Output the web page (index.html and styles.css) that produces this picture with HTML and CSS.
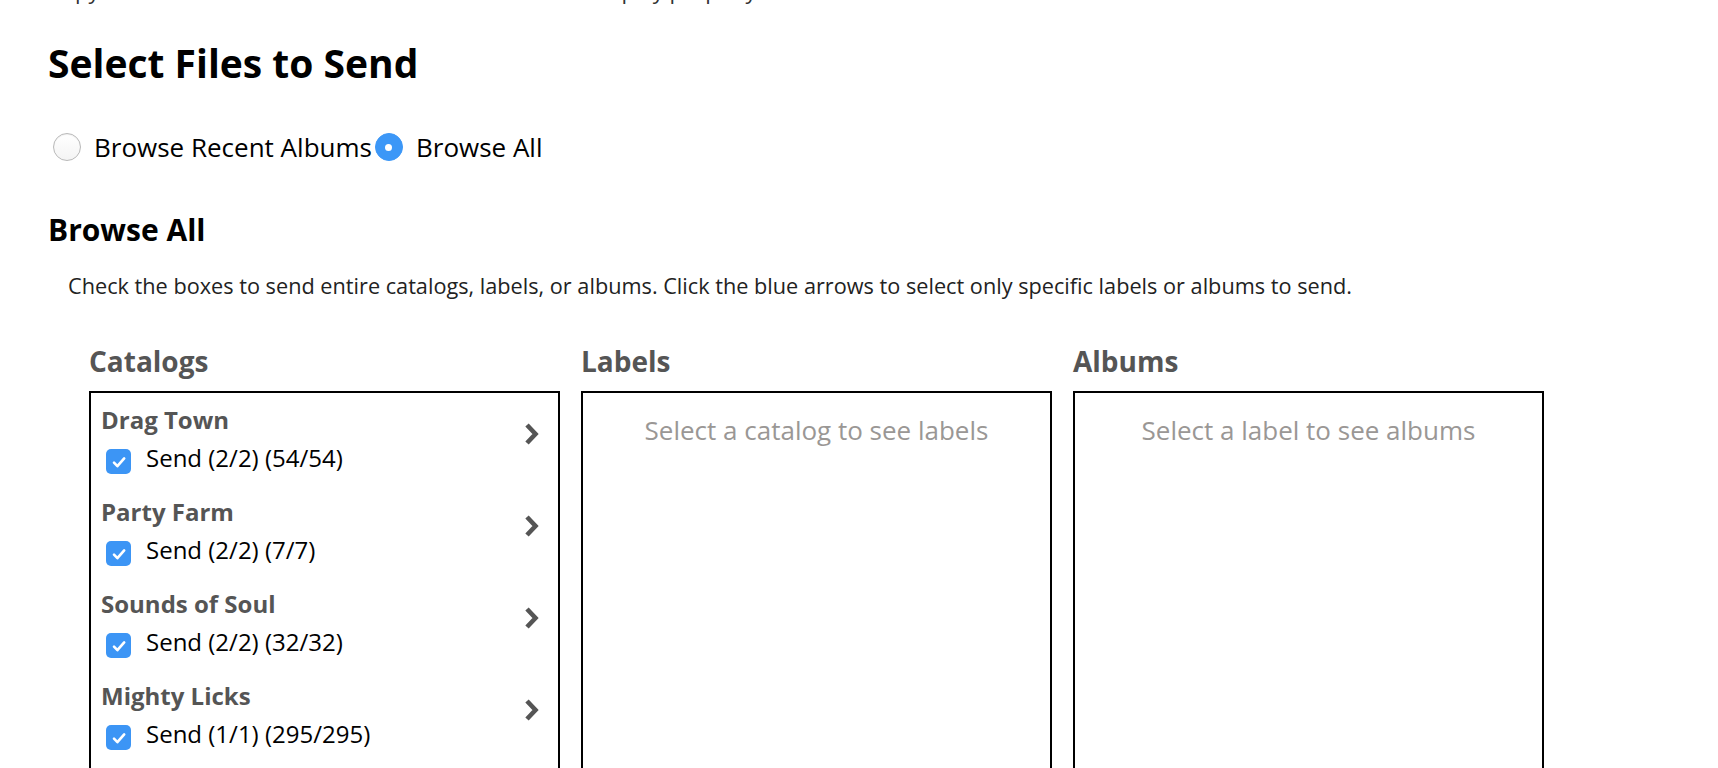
FILE: index.html
```html
<!DOCTYPE html>
<html>
<head>
<meta charset="utf-8">
<link rel="stylesheet" href="styles.css">
</head>
<body>
<div class="page">
  <p class="intro">Copy metadata of each release to the stores that will display properly on release.</p>
  <h1 class="title">Select Files to Send</h1>
  <div class="radios">
    <label class="radio"><span class="radio-dot"></span><span>Browse Recent Albums</span></label>
    <label class="radio checked"><span class="radio-dot"></span><span>Browse All</span></label>
  </div>
  <h2 class="subtitle">Browse All</h2>
  <p class="desc">Check the boxes to send entire catalogs, labels, or albums. Click the blue arrows to select only specific labels or albums to send.</p>
  <div class="columns">
    <div class="column">
      <h3 class="col-title">Catalogs</h3>
      <div class="box list">
        <div class="item">
          <div class="item-text">
            <div class="item-name">Drag Town</div>
            <div class="item-send"><span class="check"><svg viewBox="0 0 24 24" width="24" height="24"><path d="M7 12.6l3.4 3.6L17.2 8.4" fill="none" stroke="#fff" stroke-width="2.6" stroke-linecap="round" stroke-linejoin="round"/></svg></span><span>Send (2/2) (54/54)</span></div>
          </div>
          <svg class="chev" viewBox="0 0 18 24" width="18" height="24"><path d="M4 3l8.5 9L4 21" fill="none" stroke="#555" stroke-width="4.6"/></svg>
        </div>
        <div class="item">
          <div class="item-text">
            <div class="item-name">Party Farm</div>
            <div class="item-send"><span class="check"><svg viewBox="0 0 24 24" width="24" height="24"><path d="M7 12.6l3.4 3.6L17.2 8.4" fill="none" stroke="#fff" stroke-width="2.6" stroke-linecap="round" stroke-linejoin="round"/></svg></span><span>Send (2/2) (7/7)</span></div>
          </div>
          <svg class="chev" viewBox="0 0 18 24" width="18" height="24"><path d="M4 3l8.5 9L4 21" fill="none" stroke="#555" stroke-width="4.6"/></svg>
        </div>
        <div class="item">
          <div class="item-text">
            <div class="item-name">Sounds of Soul</div>
            <div class="item-send"><span class="check"><svg viewBox="0 0 24 24" width="24" height="24"><path d="M7 12.6l3.4 3.6L17.2 8.4" fill="none" stroke="#fff" stroke-width="2.6" stroke-linecap="round" stroke-linejoin="round"/></svg></span><span>Send (2/2) (32/32)</span></div>
          </div>
          <svg class="chev" viewBox="0 0 18 24" width="18" height="24"><path d="M4 3l8.5 9L4 21" fill="none" stroke="#555" stroke-width="4.6"/></svg>
        </div>
        <div class="item">
          <div class="item-text">
            <div class="item-name">Mighty Licks</div>
            <div class="item-send"><span class="check"><svg viewBox="0 0 24 24" width="24" height="24"><path d="M7 12.6l3.4 3.6L17.2 8.4" fill="none" stroke="#fff" stroke-width="2.6" stroke-linecap="round" stroke-linejoin="round"/></svg></span><span>Send (1/1) (295/295)</span></div>
          </div>
          <svg class="chev" viewBox="0 0 18 24" width="18" height="24"><path d="M4 3l8.5 9L4 21" fill="none" stroke="#555" stroke-width="4.6"/></svg>
        </div>
      </div>
    </div>
    <div class="column">
      <h3 class="col-title">Labels</h3>
      <div class="box empty">Select a catalog to see labels</div>
    </div>
    <div class="column">
      <h3 class="col-title">Albums</h3>
      <div class="box empty">Select a label to see albums</div>
    </div>
  </div>
</div>
</body>
</html>
```
FILE: styles.css
```css
html, body {
  margin: 0;
  padding: 0;
  background: #fff;
}
body {
  font-family: "Open Sans", "Liberation Sans", sans-serif;
  color: #000;
  overflow: hidden;
}
.page {
  padding-left: 48px;
}
.intro {
  margin: -22px 0 0 0;
  font-size: 22px;
  line-height: 24px;
  color: #333;
}
.title {
  margin: 35px 0 0 0;
  font-size: 39px;
  line-height: 52px;
  font-weight: 700;
}
.radios {
  display: flex;
  align-items: center;
  height: 40px;
  margin-top: 38px;
  margin-left: 5px;
  gap: 3px;
}
.radio {
  display: flex;
  align-items: center;
  gap: 13px;
  font-size: 26px;
  line-height: 40px;
}
.radio-dot {
  width: 26px;
  height: 26px;
  border-radius: 50%;
  border: 1px solid #b9b9b9;
  background: linear-gradient(#fff, #f4f4f4);
  box-shadow: inset 0 1px 1px rgba(0,0,0,0.06);
  display: flex;
  align-items: center;
  justify-content: center;
}
.radio.checked .radio-dot {
  border-color: #3c97f7;
  background: #3c97f7;
  box-shadow: none;
}
.radio.checked .radio-dot::after {
  content: "";
  width: 7px;
  height: 7px;
  border-radius: 50%;
  background: #fff;
}
.subtitle {
  margin: 43px 0 0 0;
  font-size: 30px;
  line-height: 40px;
  font-weight: 700;
}
.desc {
  margin: 20px 0 0 20px;
  font-size: 21.7px;
  line-height: 32px;
  color: #222;
}
.columns {
  display: flex;
  gap: 21px;
  margin: 39px 0 0 41px;
}
.column {
  width: 471px;
}
.col-title {
  margin: 0 0 10px 0;
  font-size: 28px;
  line-height: 40px;
  font-weight: 700;
  color: #555;
}
.box {
  box-sizing: border-box;
  height: 380px;
  border: 2px solid #000;
}
.list {
  padding: 11px 17px 0 10px;
  display: flex;
  flex-direction: column;
  gap: 22px;
}
.item {
  display: flex;
  align-items: center;
  justify-content: space-between;
}
.item-name {
  font-size: 24px;
  line-height: 32px;
  font-weight: 700;
  color: #555;
}
.item-send {
  display: flex;
  align-items: center;
  gap: 15px;
  margin-top: 6px;
  margin-left: 5px;
  font-size: 24px;
  line-height: 32px;
}
.check {
  width: 25px;
  height: 25px;
  border-radius: 5px;
  background: #3c95f5;
  display: flex;
  align-items: center;
  justify-content: center;
  margin-top: 7px;
}
.chev {
  margin-top: -10px;
}
.empty {
  padding-top: 21px;
  text-align: center;
  font-size: 26px;
  line-height: 32px;
  color: #9a9795;
}
```
